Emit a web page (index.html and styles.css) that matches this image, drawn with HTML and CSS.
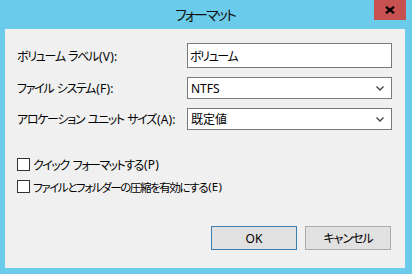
FILE: index.html
```html
<!DOCTYPE html>
<html lang="ja">
<head>
  <meta charset="UTF-8" />
  <title>フォーマット</title>
  <link rel="stylesheet" href="styles.css">
</head>
<body>
  <div class="window">
    <div class="titlebar">
      <div class="title">フォーマット</div>
      <div class="close">
        <svg width="10" height="8" viewBox="0 0 10 8">
          <path d="M1 0.8 L9 7.2 M9 0.8 L1 7.2" stroke="#000" stroke-width="2.2" />
        </svg>
      </div>
    </div>

    <div class="client">
      <div class="fields">
        <div class="label">ボリューム ラベル<span class="acc">(V):</span></div>
        <input class="textbox" type="text" value="ボリューム">

        <div class="label">ファイル システム<span class="acc">(F):</span></div>
        <div class="select">
          <span>NTFS</span>
          <svg width="8" height="5" viewBox="0 0 8 5"><path d="M0.5 0.5 L4 4 L7.5 0.5" stroke="#444" stroke-width="1.4" fill="none"/></svg>
        </div>

        <div class="label">アロケーション ユニット サイズ<span class="acc">(A):</span></div>
        <div class="select">
          <span>既定値</span>
          <svg width="8" height="5" viewBox="0 0 8 5"><path d="M0.5 0.5 L4 4 L7.5 0.5" stroke="#444" stroke-width="1.4" fill="none"/></svg>
        </div>
      </div>

      <div class="checks">
        <label class="check"><span class="box"></span>クイック フォーマットする<span class="acc">(P)</span></label>
        <label class="check tight"><span class="box"></span>ファイルとフォルダーの圧縮を有効にする<span class="acc">(E)</span></label>
      </div>

      <div class="buttons">
        <button class="btn default">OK</button>
        <button class="btn cancel">キャンセル</button>
      </div>
    </div>
  </div>
</body>
</html>
```

FILE: styles.css
```css
html, body {
  margin: 0;
  padding: 0;
}
body {
  font-family: "Noto Sans", "Noto Sans CJK JP", sans-serif;
  font-feature-settings: "palt";
  color: #000;
}
.window {
  width: 412px;
  height: 274px;
  box-sizing: border-box;
  padding: 0 7px 6px 5px;
  background: #6bcbea;
  display: flex;
  flex-direction: column;
}
.titlebar {
  height: 29px;
  display: grid;
  grid-template-columns: 1fr auto 1fr;
  align-items: start;
}
.title {
  grid-column: 2;
  font-size: 14px;
  letter-spacing: -1.8px;
  line-height: 30px;
  color: #111;
}
.close {
  grid-column: 3;
  justify-self: end;
  width: 32px;
  height: 20px;
  margin-right: -1px;
  background: #c75050;
  display: flex;
  align-items: center;
  justify-content: center;
}
.client {
  flex: 1;
  background: #f0f0f0;
  padding: 14px 13px 18px 12px;
  display: flex;
  flex-direction: column;
  font-size: 12px;
}
.fields {
  display: grid;
  grid-template-columns: 170px 1fr;
  grid-template-rows: 25px 22px 22px;
  row-gap: 9px;
  align-items: center;
}
.label {
  white-space: nowrap;
  letter-spacing: -1.3px;
  word-spacing: 1.5px;
}
.acc {
  letter-spacing: 0.2px;
  margin-left: 1px;
}
.textbox {
  box-sizing: border-box;
  height: 25px;
  width: 100%;
  margin: 0;
  border: 1px solid #7a7a7a;
  background: #fff;
  padding: 0 2px;
  font: inherit;
  letter-spacing: -1.4px;
  color: #000;
  outline: none;
}
.select {
  box-sizing: border-box;
  height: 22px;
  border: 1px solid #7a7a7a;
  background: #fff;
  padding: 0 7px 0 3px;
  display: flex;
  align-items: center;
  justify-content: space-between;
}
.checks {
  margin-top: 28px;
  display: flex;
  flex-direction: column;
  gap: 9px;
}
.check {
  display: flex;
  align-items: center;
  height: 13px;
  white-space: pre;
  letter-spacing: -1.5px;
  word-spacing: 2.5px;
}
.check.tight {
  font-size: 11.5px;
  letter-spacing: -1.4px;
}
.box {
  width: 13px;
  height: 13px;
  margin-right: 3px;
  box-sizing: border-box;
  border: 1px solid #333;
  background: #fff;
}
.buttons {
  margin-top: auto;
  margin-right: 1px;
  display: flex;
  justify-content: flex-end;
  gap: 8px;
}
.btn {
  width: 86px;
  height: 24px;
  margin: 0;
  padding: 0;
  box-sizing: border-box;
  border: 1px solid #acacac;
  background: #e1e1e1;
  font: inherit;
  color: #000;
}
.btn.default {
  border-color: #3c7fb1;
}
.btn.cancel {
  letter-spacing: -1px;
}
```
